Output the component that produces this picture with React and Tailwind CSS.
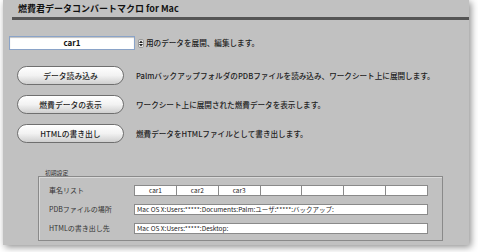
const jp = { fontFamily: '"Noto Sans CJK JP", "Liberation Sans", sans-serif' };

function PillButton({ label }) {
  return (
    <button className="w-[107px] h-[19px] shrink-0 rounded-full border border-[#6f6f6f] bg-gradient-to-b from-white via-[#f2f2f2] to-[#cfcfcf] text-[7.8px] leading-none font-medium text-[#222] shadow-[inset_0_1px_0_#fff]">
      {label}
    </button>
  );
}

const actions = [
  ['データ読み込み', 'PalmバックアップフォルダのPDBファイルを読み込み、ワークシート上に展開します。'],
  ['燃費データの表示', 'ワークシート上に展開された燃費データを表示します。'],
  ['HTMLの書き出し', '燃費データをHTMLファイルとして書き出します。'],
];

const cars = ['car1', 'car2', 'car3', '', '', '', ''];

export default function App() {
  return (
    <div className="w-[478px] h-[252px] bg-white overflow-hidden" style={jp}>
      <div className="ml-[3px] w-[466px] h-[245px] bg-[#c1c1c1] shadow-[2px_2px_7px_rgba(0,0,0,0.45)] flex flex-col">
        <div className="h-[17px] pl-[15px] pt-[3px] text-[9px] leading-[12px] font-bold text-[#111]">
          燃費君データコンバートマクロ for Mac
        </div>
        <div className="ml-[9px] h-[3px] bg-[#555]" />

        <div className="mt-[16px] ml-[6px] flex items-center h-[14px]">
          <div className="w-[126px] h-[14px] bg-white border border-[#8aa3c8] shadow-[inset_0_1px_1px_rgba(0,0,0,0.25)] flex items-center justify-center text-[8px] font-bold text-[#111]">
            car1
          </div>
          <div className="ml-[3px] w-[6px] h-[9px] rounded-[2px] bg-[#eee] border border-[#999] flex flex-col items-center justify-center">
            <svg width="4" height="7" viewBox="0 0 4 7">
              <path d="M0 3 L2 0.5 L4 3 Z M0 4 L2 6.5 L4 4 Z" fill="#222" />
            </svg>
          </div>
          <span className="ml-[2px] text-[7.6px] font-medium text-[#222]">用のデータを展開、編集します。</span>
        </div>

        <div className="mt-[16px] ml-[14px] flex flex-col gap-[10px]">
          {actions.map(([label, desc]) => (
            <div key={label} className="flex items-center gap-[12px]">
              <PillButton label={label} />
              <span className="text-[7.6px] font-medium text-[#222] whitespace-nowrap">{desc}</span>
            </div>
          ))}
        </div>

        <div className="mt-[27px] ml-[35px] w-[405px]">
          <div className="pl-[7px] text-[5.8px] leading-[6px] text-[#333]">初期設定</div>
          <div className="h-[65px] border border-[#8a8a8a] shadow-[inset_1px_1px_0_rgba(255,255,255,0.4)] pt-[8px] pl-[10px] pr-[14px] flex flex-col gap-[9px]">
            <div className="flex items-center h-[10px]">
              <span className="w-[85px] text-[7px] text-[#333]">車名リスト</span>
              <div className="flex-1 h-[11px] flex bg-white border border-[#8a8a8a]">
                {cars.map((c, i) => (
                  <div key={i} className="flex-1 border-r border-[#8a8a8a] last:border-r-0 text-[6.5px] leading-[9px] text-center text-[#222]">
                    {c}
                  </div>
                ))}
              </div>
            </div>
            <div className="flex items-center h-[10px]">
              <span className="w-[85px] text-[7px] text-[#333]">PDBファイルの場所</span>
              <div className="flex-1 h-[11px] bg-white border border-[#8a8a8a] pl-[2px] text-[6.5px] leading-[9px] text-[#222]">
                Mac OS X:Users:*****:Documents:Palm:ユーザ:*****:バックアップ:
              </div>
            </div>
            <div className="flex items-center h-[10px]">
              <span className="w-[85px] text-[7px] text-[#333]">HTMLの書き出し先</span>
              <div className="flex-1 h-[11px] bg-white border border-[#8a8a8a] pl-[2px] text-[6.5px] leading-[9px] text-[#222]">
                Mac OS X:Users:*****:Desktop:
              </div>
            </div>
          </div>
        </div>
      </div>
    </div>
  );
}
